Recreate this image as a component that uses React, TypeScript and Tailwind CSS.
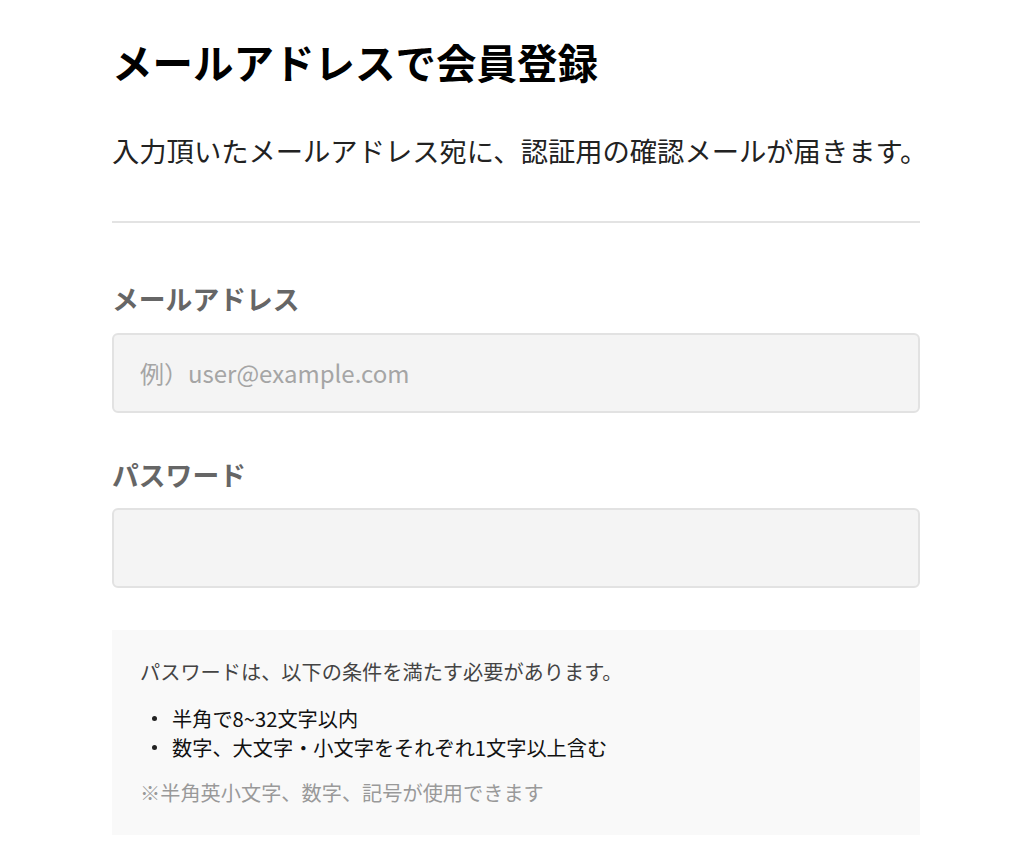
export default function App() {
    return (
        <div className="min-h-[867px] bg-white font-['Noto_Sans_CJK_JP','Noto_Sans',sans-serif]">
            <div className="ml-[112px] w-[808px] pt-[42px]">
                <h1 className="text-[40.5px] leading-none font-bold text-black">メールアドレスで会員登録</h1>
                <p className="mt-[54px] whitespace-nowrap text-[27.3px] leading-none text-[#222]">
                    入力頂いたメールアドレス宛に、認証用の確認メールが届きます。
                </p>
                <div className="mt-[57px] h-[2px] bg-[#e3e3e3]" />

                <Field label="メールアドレス" placeholder="例）user@example.com" className="mt-[63px]" />
                <Field label="パスワード" type="password" className="mt-[49px]" />

                <div className="mt-[42px] bg-[#f9f9f9] px-[28px] pt-[32px] pb-[32px] text-[20.2px] leading-none">
                    <p className="text-[#444]">パスワードは、以下の条件を満たす必要があります。</p>
                    <ul className="mt-[26px] flex flex-col gap-[9px] text-[#111]">
                        <Rule text="半角で8~32文字以内" />
                        <Rule text="数字、大文字・小文字をそれぞれ1文字以上含む" />
                    </ul>
                    <p className="mt-[25px] text-[#999]">※半角英小文字、数字、記号が使用できます</p>
                </div>
            </div>
        </div>
    );
}

function Field({
    label,
    placeholder,
    type = "text",
    className = "",
}: {
    label: string;
    placeholder?: string;
    type?: string;
    className?: string;
}) {
    return (
        <div className={className}>
            <label className="block text-[26.8px] leading-none font-bold text-[#666]">{label}</label>
            <input
                type={type}
                placeholder={placeholder}
                className="mt-[20px] block h-[80px] w-full rounded-[6px] border-2 border-[#e2e2e2] bg-[#f4f4f4] px-[26px] text-[24px] text-[#333] placeholder:text-[#a5a5a5] outline-none"
            />
        </div>
    );
}

function Rule({ text }: { text: string }) {
    return (
        <li className="flex items-center">
            <span className="ml-[12px] mr-[15px] h-[5px] w-[5px] rounded-full bg-[#222]" />
            {text}
        </li>
    );
}
